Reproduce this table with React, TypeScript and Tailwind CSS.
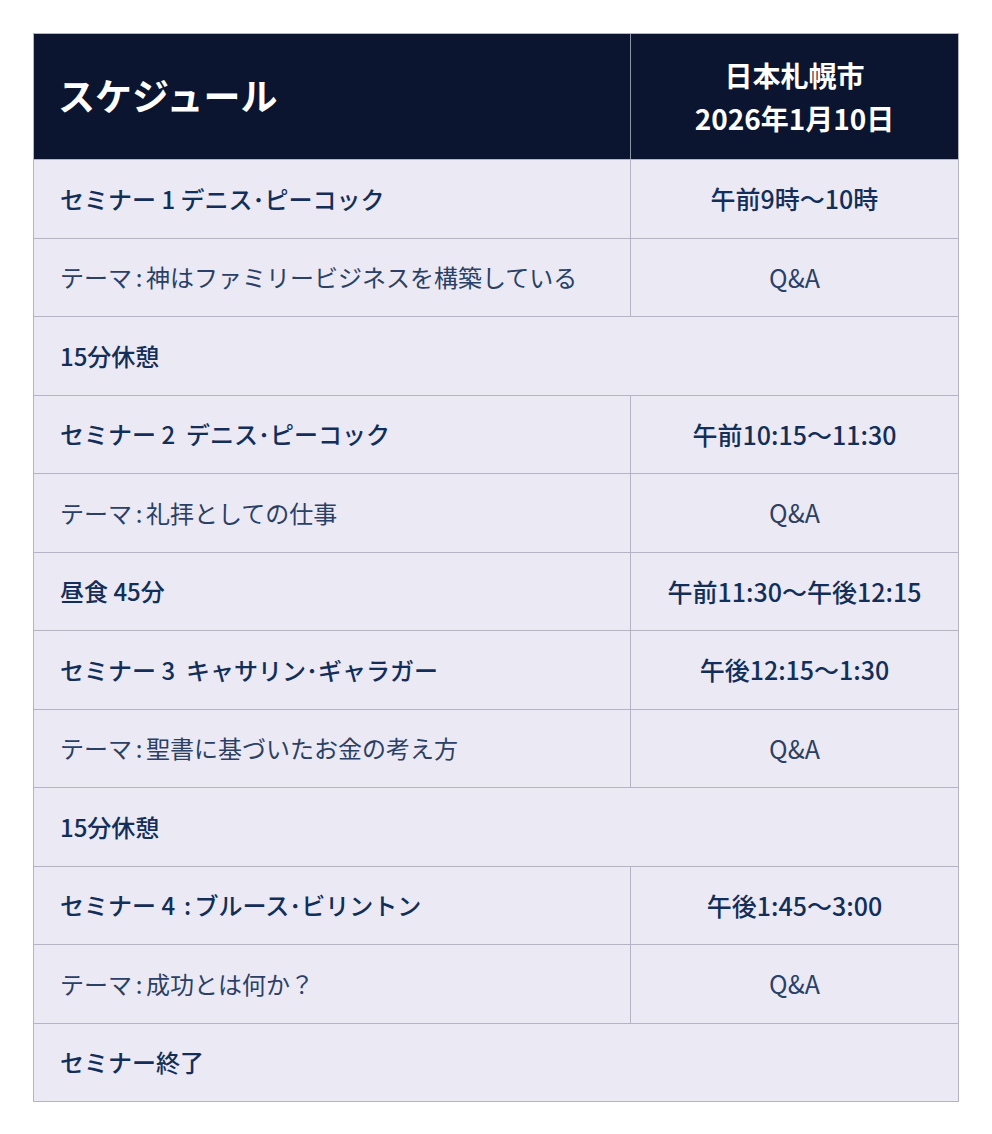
import React from "react";

type Row = { left: React.ReactNode; right?: string; bold?: boolean; span?: boolean };

// narrow colon like the source layout
const C = () => <span className="inline-block w-[14px] text-center">:</span>;

const rows: Row[] = [
  { left: "セミナー 1 デニス･ピーコック", right: "午前9時〜10時", bold: true },
  { left: <>テーマ<C />神はファミリービジネスを構築している</>, right: "Q&A" },
  { left: "15分休憩", bold: true, span: true },
  { left: "セミナー 2  デニス･ピーコック", right: "午前10:15〜11:30", bold: true },
  { left: <>テーマ<C />礼拝としての仕事</>, right: "Q&A" },
  { left: "昼食 45分", right: "午前11:30〜午後12:15", bold: true },
  { left: "セミナー 3  キャサリン･ギャラガー", right: "午後12:15〜1:30", bold: true },
  { left: <>テーマ<C />聖書に基づいたお金の考え方</>, right: "Q&A" },
  { left: "15分休憩", bold: true, span: true },
  { left: <>セミナー 4 <C />ブルース･ビリントン</>, right: "午後1:45〜3:00", bold: true },
  { left: <>テーマ<C />成功とは何か？</>, right: "Q&A" },
  { left: "セミナー終了", bold: true, span: true },
];

export default function App() {
  return (
    <div
      className="w-[992px] h-[1134px] bg-white pt-[33px] pl-[33px]"
      style={{ fontFamily: '"Noto Sans CJK JP", "Noto Sans", sans-serif' }}
    >
      <div className="w-[926px] border border-[#b4b4c4] bg-[#ebeaf4]">
        <div className="flex h-[125px] bg-[#0c1530] text-white">
          <div className="flex w-[596px] items-center pl-[24px] pb-[2px] text-[37px] font-bold">
            スケジュール
          </div>
          <div className="flex flex-1 flex-col items-center justify-center border-l border-[#8d93a6] text-[28px] font-bold leading-[43px]">
            <span>日本札幌市</span>
            <span>2026年1月10日</span>
          </div>
        </div>
        {rows.map((r, i) => (
          <div key={i} className="flex h-[78.5px] border-t border-[#b4b4c4]">
            <div
              className={`flex items-center whitespace-pre pl-[26px] text-[24px] ${
                r.span ? "flex-1" : "w-[596px]"
              } ${r.bold ? "font-medium text-[#132e58]" : "text-[#2c3f64]"}`}
            >
              {r.left}
            </div>
            {!r.span && (
              <div
                className={`flex flex-1 items-center justify-center border-l border-[#b4b4c4] text-[25px] ${
                  r.bold ? "font-medium text-[#132e58]" : "text-[#2c3f64]"
                }`}
              >
                {r.right}
              </div>
            )}
          </div>
        ))}
      </div>
    </div>
  );
}
